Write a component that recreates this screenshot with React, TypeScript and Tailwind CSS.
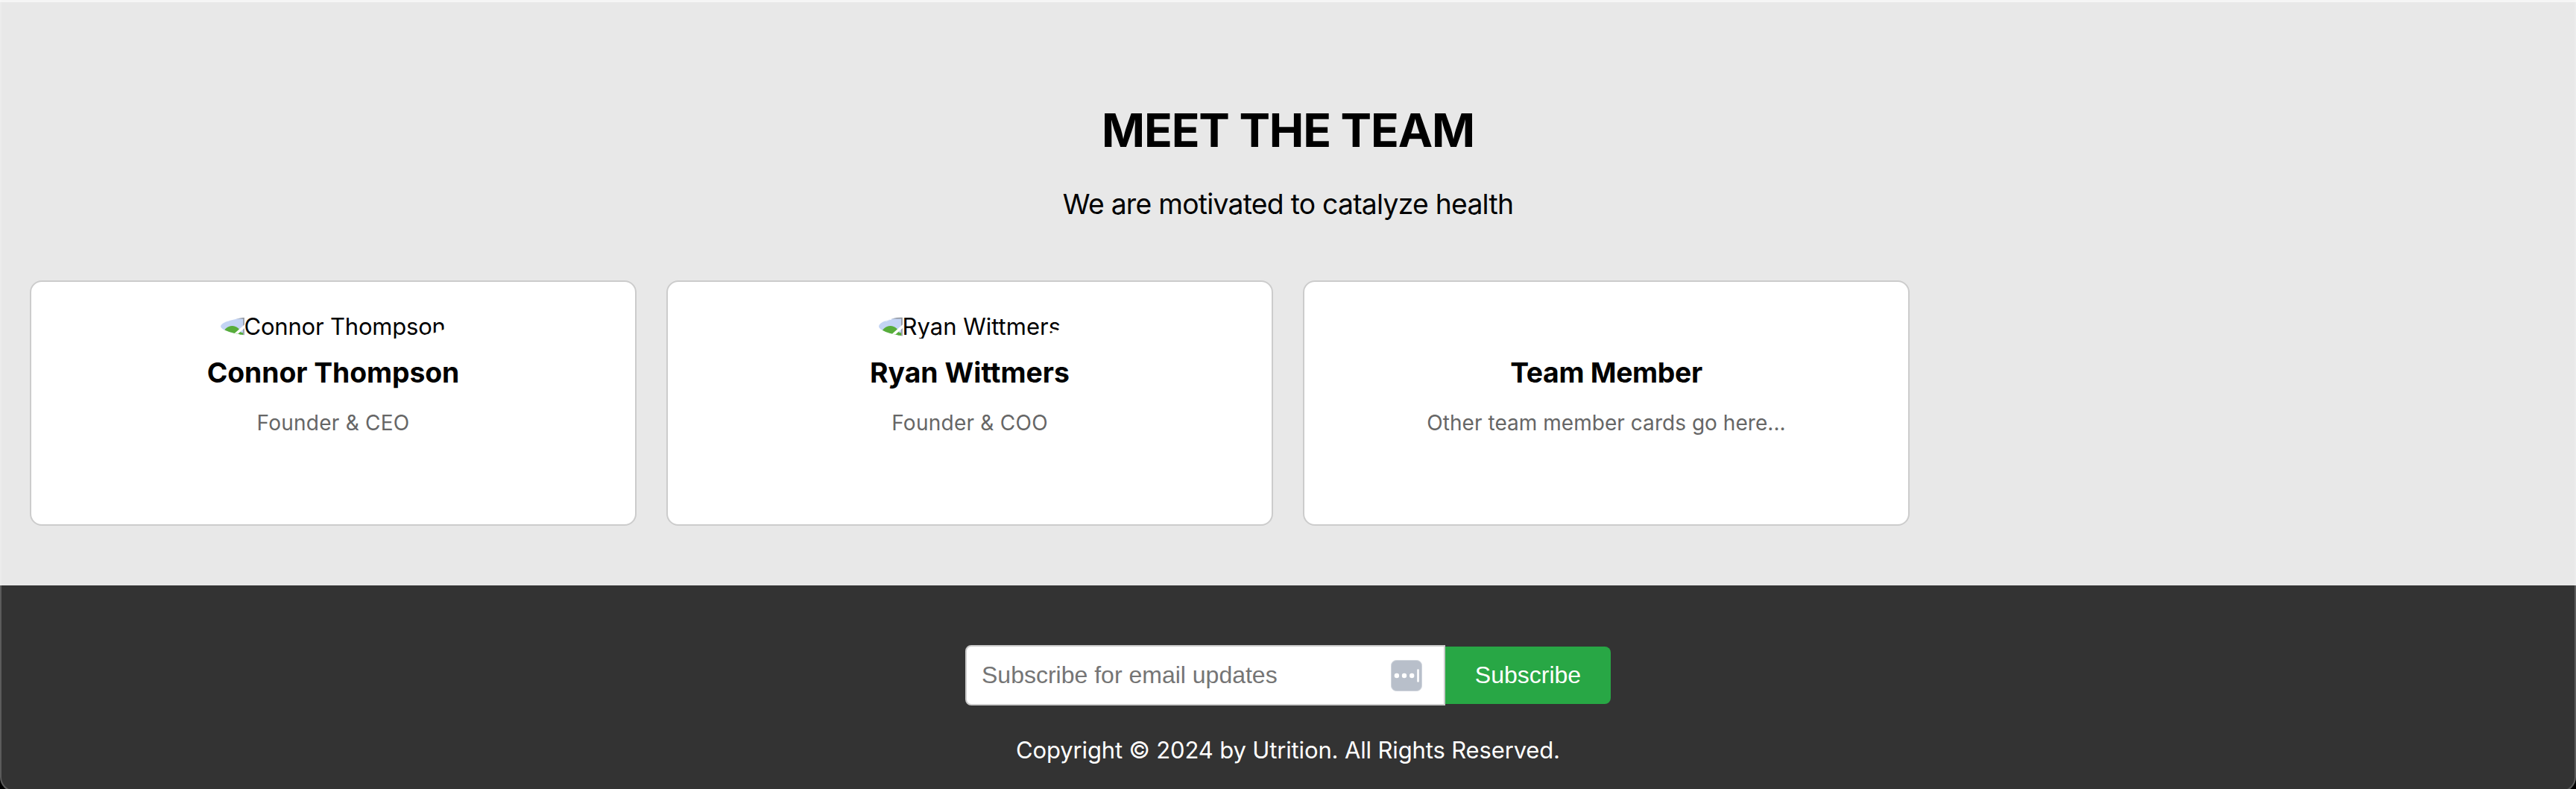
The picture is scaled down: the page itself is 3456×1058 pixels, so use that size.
type Member = {
  name: string;
  role: string;
  photoBox?: string;
  nameSpacing: string;
  roleSpacing: string;
};

const members: Member[] = [
  {
    name: "Connor Thompson",
    role: "Founder & CEO",
    photoBox: "w-[303px] tracking-[-0.2px]",
    nameSpacing: "tracking-[-0.05px]",
    roleSpacing: "tracking-[0.25px]",
  },
  {
    name: "Ryan Wittmers",
    role: "Founder & COO",
    photoBox: "w-[245px]",
    nameSpacing: "tracking-[0.05px]",
    roleSpacing: "tracking-[0.25px]",
  },
  {
    name: "Team Member",
    role: "Other team member cards go here...",
    nameSpacing: "tracking-[-0.3px]",
    roleSpacing: "tracking-[0.04px]",
  },
];

function BrokenImageIcon() {
  return (
    <svg viewBox="0 0 32 32" className="mt-[6px] h-8 w-8 shrink-0">
      <rect x="0" y="2" width="31" height="30" fill="#c3d4f4" />
      <path d="M0 0H31V2.6H22Q18 2.6 16 5Q13 4.5 11 6.5H7Q3 8 0 10Z" fill="#fff" />
      <path d="M17 2.6H31V32" fill="none" stroke="#8f949c" strokeWidth="1.6" />
      <ellipse cx="15.5" cy="25" rx="12" ry="12" fill="#57ad3a" />
      <path d="M25 32L25 24L28 21.5L30 22.5V32Z" fill="#57ad3a" />
      <path d="M35 11L14 29.5" stroke="#fff" strokeWidth="3.6" />
    </svg>
  );
}

function TeamCard({ member }: { member: Member }) {
  return (
    <article className="flex h-[329px] flex-col items-center rounded-[16px] border-2 border-[#ccc] bg-white pt-10">
      <div className="h-[38px]">
        {member.photoBox && (
          <div
            className={`flex h-[39px] overflow-hidden rounded-[50%] whitespace-nowrap text-[31px] leading-[39px] ${member.photoBox}`}
          >
            <BrokenImageIcon />
            <span>{member.name}</span>
          </div>
        )}
      </div>
      <h3 className={`mt-[21px] text-[37.3px] leading-[46px] font-bold ${member.nameSpacing}`}>
        {member.name}
      </h3>
      <p className={`mt-[27px] text-[28px] leading-[34px] text-[#666] ${member.roleSpacing}`}>
        {member.role}
      </p>
    </article>
  );
}

function AutofillIcon() {
  return (
    <svg viewBox="0 0 42 42" className="absolute top-5 right-[31px] h-[42px] w-[42px]">
      <rect x="0.5" y="0.5" width="41" height="41" rx="7" fill="#b8bfca" stroke="#cfd4dc" />
      <circle cx="7.9" cy="21" r="3.2" fill="#fff" />
      <circle cx="18" cy="21" r="3.2" fill="#fff" />
      <circle cx="28.2" cy="21" r="3.2" fill="#fff" />
      <rect x="35.2" y="12.3" width="2.6" height="17.4" rx="1.3" fill="#fff" />
    </svg>
  );
}

export default function App() {
  return (
    <div className="relative h-[1058px] overflow-hidden bg-[#333] font-['Inter',sans-serif] text-black">
      <section className="h-[785px] border-t-[3px] border-[#f5f5f5] bg-[#e8e8e8] px-10 pt-[134px]">
        <h2 className="text-center text-[62.3px] leading-[76px] font-bold tracking-[-1.14px]">
          MEET THE TEAM
        </h2>
        <p className="mt-[38px] text-center text-[37.3px] leading-[46px] tracking-[-0.75px]">
          We are motivated to catalyze health
        </p>
        <div className="mt-[79px] grid grid-cols-4 gap-10">
          {members.map((member) => (
            <TeamCard key={member.name} member={member} />
          ))}
        </div>
      </section>

      <footer className="flex flex-col items-center pt-20 text-white">
        <form className="flex items-center font-['Liberation_Sans',Arial,sans-serif] text-[32px]">
          <div className="relative">
            <input
              type="email"
              placeholder="Subscribe for email updates"
              className="block h-[81px] w-[644px] rounded-l-lg border-2 border-[#ccc] bg-white px-5 text-black placeholder:text-[#757575]"
            />
            <AutofillIcon />
          </div>
          <button type="button" className="h-[77px] w-[222px] rounded-r-lg bg-[#28a745] pb-0.5">
            Subscribe
          </button>
        </form>
        <p className="mt-[41px] text-[31px] leading-[38px] tracking-[-0.143px]">
          Copyright © 2024 by Utrition. All Rights Reserved.
        </p>
      </footer>

      {/* Window frame: thin side edges and rounded lower corners */}
      <div className="pointer-events-none absolute inset-x-0 top-0 h-[1062px] rounded-b-[20px] border-x-2 border-b-2 border-white/20 shadow-[0_0_0_20px_#000]" />
    </div>
  );
}
